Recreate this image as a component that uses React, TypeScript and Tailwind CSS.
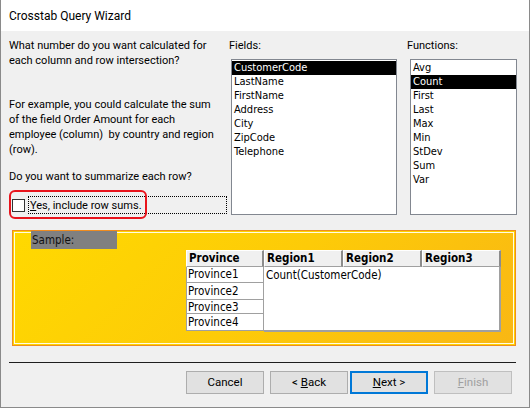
const ui = "font-['Roboto','Liberation_Sans',sans-serif]";
const tah = "font-['DejaVu_Sans_Condensed','DejaVu_Sans',sans-serif]";

const fields = ["CustomerCode", "LastName", "FirstName", "Address", "City", "ZipCode", "Telephone"];
const functions = ["Avg", "Count", "First", "Last", "Max", "Min", "StDev", "Sum", "Var"];

type ListProps = {
  items: string[];
  selected: string;
  width: string;
};

const ListBox = ({ items, selected, width }: ListProps) => (
  <div className={`${width} h-[156px] bg-white border border-[#828790] pt-px ${tah} text-[11px]`}>
    {items.map((it) => (
      <div
        key={it}
        className={`h-[14px] leading-[14px] pl-[2px] ${it === selected ? "bg-black text-white" : "text-black"}`}
      >
        {it}
      </div>
    ))}
  </div>
);

const headCell = "h-[17px] bg-[#f0f0f0] border-t border-l border-t-white border-l-white border-r-2 border-b border-r-[#8c8c8c] border-b-[#a0a0a0] font-bold leading-[15px] pl-[2px]";
const provCell = "bg-white border-l border-b border-r border-[#a0a0a0] pl-px";
const btn = "w-[78px] h-[23px] bg-[#e1e1e1] text-[11.5px]";

const App = () => {
  return (
    <div className={`relative w-[530px] h-[408px] overflow-hidden bg-[#f0f0f0] border-x border-b border-[#8a8a8a] flex flex-col text-[11px] text-black ${ui}`}>
      {/* TITLE */}
      <div className="h-[31px] shrink-0 bg-white flex items-center pl-2 text-[12px]">Crosstab Query Wizard</div>

      {/* TOP SECTION */}
      <div className="flex pt-[7px]">
        <div className="w-[228px] pl-2 leading-[15px] whitespace-nowrap">
          <p>What number do you want calculated for<br />each column and row intersection?</p>
          <p className="mt-[29px]">
            For example, you could calculate the sum<br />of the field Order Amount for each<br />employee (column)&nbsp; by country and region<br />(row).
          </p>
          <p className="mt-[12px]">Do you want to summarize each row?</p>
          <div className="mt-[12px] flex items-center">
            <div className="w-[13px] h-[13px] bg-white border border-[#333] ml-[3px]" />
            <div className="ml-[3px] w-[199px] h-[18px] border border-dotted border-black flex items-center pl-px">
              <span><span className="underline">Y</span>es, include row sums.</span>
            </div>
          </div>
        </div>
        <div className="w-[178px]">
          <div className="leading-[15px]">Fields:</div>
          <div className="mt-[6px] ml-[2px]">
            <ListBox items={fields} selected="CustomerCode" width="w-[166px]" />
          </div>
        </div>
        <div>
          <div className="leading-[15px]">Functions:</div>
          <div className="mt-[6px] ml-[3px]">
            <ListBox items={functions} selected="Count" width="w-[107px]" />
          </div>
        </div>
      </div>

      {/* SAMPLE */}
      <div className="ml-[11px] mt-[15px] w-[504px] h-[116px] shrink-0 border border-[#f08c1e] shadow-[inset_0_0_0_1px_#ffd300,inset_0_0_0_2px_#fffbe6] bg-[linear-gradient(135deg,#ffd900_0%,#fdcb08_50%,#f9b714_100%)]">
        <div className={`ml-[18px] w-[86px] h-[18px] bg-[#808080] ${tah} text-[11.5px] leading-[18px] pl-[1px] text-[#111]`}>Sample:</div>
        <div className={`ml-[173px] mt-px flex ${tah} text-[11.5px]`}>
          <div className="w-[78px]">
            <div className={headCell}>Province</div>
            <div className={`${provCell} h-[16px] leading-[15px]`}>Province1</div>
            <div className={`${provCell} h-[17px] leading-[16px]`}>Province2</div>
            <div className={`${provCell} h-[14px] leading-[14px]`}>Province3</div>
            <div className={`${provCell} h-[17px] leading-[16px]`}>Province4</div>
          </div>
          <div className="w-[237px]">
            <div className="flex">
              <div className={`w-[79px] ${headCell}`}>Region1</div>
              <div className={`w-[79px] ${headCell}`}>Region2</div>
              <div className={`w-[79px] ${headCell}`}>Region3</div>
            </div>
            <div className="h-[65px] bg-white border-r-2 border-b-2 border-[#a0a0a0] pl-[2px] leading-[16px]">Count(CustomerCode)</div>
          </div>
        </div>
      </div>

      {/* SEPARATOR */}
      <div className="ml-[8px] mt-[16px] w-[507px] h-px shrink-0 bg-[#1e1e1e]" />

      {/* BUTTONS */}
      <div className="ml-[185px] mt-[8px] flex">
        <button className={`${btn} border border-[#adadad]`}>Cancel</button>
        <button className={`${btn} ml-[6px] border border-[#adadad]`}>&lt; <span className="underline">B</span>ack</button>
        <button className={`${btn} ml-[2px] border-2 border-[#0078d7]`}><span className="underline">N</span>ext &gt;</button>
        <button className={`${btn} ml-[6px] border border-[#bfbfbf] text-[#a0a0a0]`}><span className="underline">F</span>inish</button>
      </div>

      {/* ANNOTATION */}
      <div className="absolute left-[8px] top-[190px] w-[138px] h-[29px] border-2 border-[#e8141c] rounded-[6px]" />
    </div>
  );
};

export default App;
